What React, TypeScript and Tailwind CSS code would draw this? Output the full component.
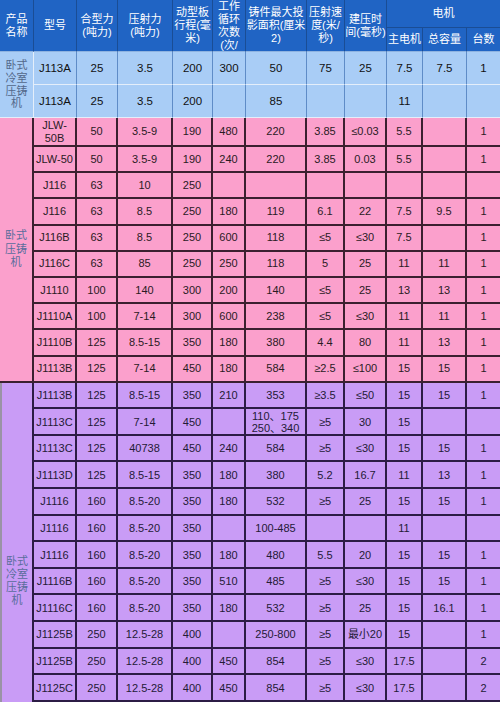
import React from "react";

type Row = (string | string[])[];

const header: string[][] = [
  ["产品", "名称"],
  ["型号"],
  ["合型力", "(吨力)"],
  ["压射力", "(吨力)"],
  ["动型板", "行程(毫", "米)"],
  ["工作", "循环", "次数", "(次/"],
  ["铸件最大投", "影面积(厘米", "2)"],
  ["压射速", "度(米/", "秒)"],
  ["建压时", "间(毫秒)"],
];

const blueRows: Row[] = [
  ["J113A", "25", "3.5", "200", "300", "50", "75", "25", "7.5", "7.5", "1"],
  ["J113A", "25", "3.5", "200", "", "85", "", "", "11", "", ""],
];

const pinkRows: Row[] = [
  [["JLW-", "50B"], "50", "3.5-9", "190", "480", "220", "3.85", "≤0.03", "5.5", "", "1"],
  ["JLW-50", "50", "3.5-9", "190", "240", "220", "3.85", "0.03", "5.5", "", "1"],
  ["J116", "63", "10", "250", "", "", "", "", "", "", ""],
  ["J116", "63", "8.5", "250", "180", "119", "6.1", "22", "7.5", "9.5", "1"],
  ["J116B", "63", "8.5", "250", "600", "118", "≤5", "≤30", "7.5", "", "1"],
  ["J116C", "63", "85", "250", "250", "118", "5", "25", "11", "11", "1"],
  ["J1110", "100", "140", "300", "200", "140", "≤5", "25", "13", "13", "1"],
  ["J1110A", "100", "7-14", "300", "600", "238", "≤5", "≤30", "11", "11", "1"],
  ["J1110B", "125", "8.5-15", "350", "180", "380", "4.4", "80", "11", "13", "1"],
  ["J1113B", "125", "7-14", "450", "180", "584", "≥2.5", "≤100", "15", "15", "1"],
];

const purpleRows: Row[] = [
  ["J1113B", "125", "8.5-15", "350", "210", "353", "≥3.5", "≤50", "15", "15", "1"],
  ["J1113C", "125", "7-14", "450", "", ["110、175", "250、340"], "≥5", "30", "15", "", ""],
  ["J1113C", "125", "40738", "450", "240", "584", "≥5", "≤30", "15", "15", "1"],
  ["J1113D", "125", "8.5-15", "350", "180", "380", "5.2", "16.7", "11", "13", "1"],
  ["J1116", "160", "8.5-20", "350", "180", "532", "≥5", "25", "15", "15", "1"],
  ["J1116", "160", "8.5-20", "350", "", "100-485", "", "", "11", "", ""],
  ["J1116", "160", "8.5-20", "350", "180", "480", "5.5", "20", "15", "15", "1"],
  ["J1116B", "160", "8.5-20", "350", "510", "485", "≥5", "≤30", "15", "15", "1"],
  ["J1116C", "160", "8.5-20", "350", "180", "532", "≥5", "25", "15", "16.1", "1"],
  ["J1125B", "250", "12.5-28", "400", "", "250-800", "≥5", "最小20", "15", "", "1"],
  ["J1125B", "250", "12.5-28", "400", "450", "854", "≥5", "≤30", "17.5", "", "2"],
  ["J1125C", "250", "12.5-28", "400", "450", "854", "≥5", "≤30", "17.5", "", "2"],
];

function Lines({ lines }: { lines: string | string[] }) {
  const list = Array.isArray(lines) ? lines : [lines];
  return (
    <span className="flex flex-col items-center whitespace-nowrap">
      {list.map((l, i) => (
        <span key={i}>{l}</span>
      ))}
    </span>
  );
}

const cell = "flex items-center justify-center overflow-hidden text-center";

export default function App() {
  return (
    <div
      className="grid h-[703px] w-[500px] grid-cols-[34px_43px_41px_55px_40px_33px_61px_38px_42px_36px_44px_33px] grid-rows-[28px_24px_33px_33px_29px_repeat(9,26.2px)_repeat(12,26.6px)] overflow-hidden bg-white"
      style={{ fontFamily: '"Liberation Sans", "Noto Sans CJK SC", sans-serif' }}
    >
      {/* header */}
      {header.map((h, i) => (
        <div
          key={i}
          className={`${cell} row-span-2 border-r border-b border-r-[#1a4d95] border-b-[#8fb3e0] bg-[#2064c4] text-[11px] leading-[13px] text-white`}
        >
          <Lines lines={h} />
        </div>
      ))}
      <div className={`${cell} col-span-3 border-b border-[#1a4d95] bg-[#2064c4] text-[11px] text-white`}>电机</div>
      {["主电机", "总容量", "台数"].map((t, i) => (
        <div
          key={t}
          className={`${cell} border-b border-b-[#8fb3e0] bg-[#2064c4] text-[11px] text-white ${i < 2 ? "border-r border-r-[#1a4d95]" : ""}`}
        >
          {t}
        </div>
      ))}

      {/* blue section */}
      <div className={`${cell} row-span-2 border-r border-b border-[#e4eefa] bg-[#a9cdf6] text-[11px] leading-[12.7px] text-[#53688a]`}>
        <Lines lines={["卧式", "冷室", "压铸", "机"]} />
      </div>
      {blueRows.map((r, ri) =>
        r.map((v, ci) => (
          <div
            key={`b${ri}-${ci}`}
            className={`${cell} border-b border-b-[#e4eefa] bg-[#a9cdf6] text-[11.5px] leading-[13px] text-[#111] ${ci < 10 ? "border-r border-r-[#5f8cc7]" : ""}`}
          >
            <Lines lines={v} />
          </div>
        ))
      )}

      {/* pink section */}
      <div className={`${cell} row-span-10 border-r-2 border-b-2 border-[#3b2030] bg-[#fba0cc] text-[11px] leading-[13.5px] text-[#5a6d9c]`}>
        <Lines lines={["卧式", "压铸", "机"]} />
      </div>
      {pinkRows.map((r, ri) =>
        r.map((v, ci) => (
          <div
            key={`p${ri}-${ci}`}
            className={`${cell} border-b-2 border-b-[#3b2030] bg-[#fba0cc] text-[11px] leading-[13px] text-[#2a1a24] ${ci < 10 ? "border-r-2 border-r-[#3b2030]" : ""}`}
          >
            <Lines lines={v} />
          </div>
        ))
      )}

      {/* purple section */}
      <div className="row-span-12 flex flex-col items-center overflow-hidden border-r-2 border-l-2 border-l-[#9a93a6] border-r-[#2c1c45] bg-[#c99cf6] pt-[172px] text-center text-[11px] leading-[13px] text-[#5a6d9c]">
        <Lines lines={["卧式", "冷室", "压铸", "机"]} />
      </div>
      {purpleRows.map((r, ri) =>
        r.map((v, ci) => (
          <div
            key={`u${ri}-${ci}`}
            className={`${cell} border-b-2 border-b-[#2c1c45] bg-[#c99cf6] text-[11px] leading-[12px] text-[#241a36] ${ci < 10 ? "border-r-2 border-r-[#2c1c45]" : ""}`}
          >
            <Lines lines={v} />
          </div>
        ))
      )}
    </div>
  );
}
